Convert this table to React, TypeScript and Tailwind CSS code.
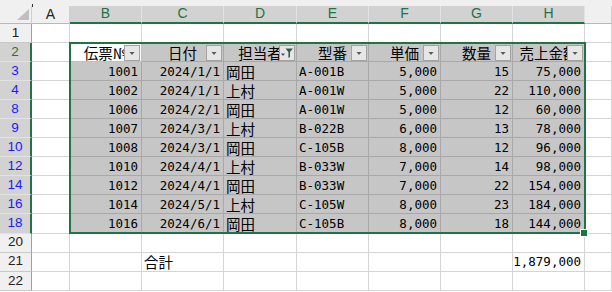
import React from 'react';

// sheet fonts
const mono = "font-['DejaVu_Sans_Mono',monospace] text-[12.5px] leading-[17px]";
const jp = "font-['Noto_Sans_CJK_JP',sans-serif] text-[14.5px] leading-[17px]";

const letters = ['B', 'C', 'D', 'E', 'F', 'G', 'H'];
const heads = ['伝票№', '日付', '担当者', '型番', '単価', '数量', '売上金額'];

// visible rows after the 担当者 filter
const rows = [
  { n: 3, v: ['1001', '2024/1/1', '岡田', 'A-001B', '5,000', '15', '75,000'] },
  { n: 4, v: ['1002', '2024/1/1', '上村', 'A-001W', '5,000', '22', '110,000'] },
  { n: 8, v: ['1006', '2024/2/1', '岡田', 'A-001W', '5,000', '12', '60,000'] },
  { n: 9, v: ['1007', '2024/3/1', '上村', 'B-022B', '6,000', '13', '78,000'] },
  { n: 10, v: ['1008', '2024/3/1', '岡田', 'C-105B', '8,000', '12', '96,000'] },
  { n: 12, v: ['1010', '2024/4/1', '上村', 'B-033W', '7,000', '14', '98,000'] },
  { n: 14, v: ['1012', '2024/4/1', '岡田', 'B-033W', '7,000', '22', '154,000'] },
  { n: 16, v: ['1014', '2024/5/1', '上村', 'C-105W', '8,000', '23', '184,000'] },
  { n: 18, v: ['1016', '2024/6/1', '岡田', 'C-105B', '8,000', '18', '144,000'] },
];

function FilterButton({ active }: { active?: boolean }) {
  return (
    <span className="absolute right-[1px] bottom-0 flex h-4 w-4 items-center justify-center border border-[#a3a3a3] bg-[#e6e6e6]">
      {active ? (
        <svg width="14" height="14" viewBox="0 0 14 14">
          <path d="M1 7.5h4l-2 2.5z" fill="#505050" />
          <path d="M5.5 2.5h7.5l-3 3.5v5l-1.6 1v-6z" fill="#2f5e4e" />
        </svg>
      ) : (
        <svg width="14" height="14" viewBox="0 0 14 14">
          <path d="M4.5 6h5l-2.5 3z" fill="#595959" />
        </svg>
      )}
    </span>
  );
}

function ColHead({ label, sel }: { label?: string; sel?: boolean }) {
  return (
    <div
      className={
        sel
          ? "flex items-center justify-center border-r border-b-2 border-r-[#e2e2e2] border-b-[#217346] bg-[#d2d2d2] font-['Liberation_Sans',sans-serif] text-[14px] text-[#217346]"
          : "flex items-center justify-center border-r border-b border-r-[#d0d0d0] border-b-[#b8b8b8] bg-[#f0f0f0] font-['Liberation_Sans',sans-serif] text-[14px] text-[#222]"
      }
    >
      {label}
    </div>
  );
}

function RowHead({ label, tone }: { label: string; tone: 'plain' | 'top' | 'filt' }) {
  const cls =
    tone === 'plain'
      ? 'bg-[#f0f0f0] text-[#222] border-r border-b border-r-[#a0a0a0] border-b-[#c8c8c8]'
      : tone === 'top'
        ? 'bg-[#d2d2d2] text-[#217346] border-r-2 border-b border-r-[#217346] border-b-[#e2e2e2]'
        : 'bg-[#d2d2d2] text-[#1a1aff] border-r-2 border-b border-r-[#217346] border-b-[#e2e2e2]';
  return (
    <div className={`flex items-center justify-center font-['Liberation_Sans',sans-serif] text-[13.5px] ${cls}`}>
      {label}
    </div>
  );
}

function Blank() {
  return <div className="border-r border-b border-[#d4d4d4] bg-white" />;
}

function HeadCell({ text, active, filtered }: { text: string; active?: boolean; filtered?: boolean }) {
  return (
    <div
      className={`relative flex items-center justify-center whitespace-nowrap border-r border-b text-black ${jp} ${
        active ? 'border-[#c0c0c0] bg-white' : 'border-[#a8a8a8] bg-[#c6c6c6]'
      }`}
    >
      <span>{text}</span>
      <FilterButton active={filtered} />
    </div>
  );
}

function DataCell({ text, col }: { text: string; col: number }) {
  const left = col === 2 || col === 3;
  const font = col === 2 ? jp : mono;
  return (
    <div
      className={`flex items-center whitespace-nowrap border-r border-b border-[#a8a8a8] bg-[#c6c6c6] text-black ${font} ${
        left ? 'justify-start pl-[2px]' : 'justify-end pr-[3px]'
      }`}
    >
      <span>{text}</span>
    </div>
  );
}

export default function App() {
  return (
    <div className="relative h-[292px] w-[612px] overflow-hidden bg-white">
      {/* strip above the column headers */}
      <div className="relative h-[5.5px] bg-[#f0f0f0]">
        <span className="absolute left-[32px] top-[4px] h-[3px] w-px bg-[#333]" />
      </div>

      <div className="grid grid-cols-[32px_38px_72px_82px_73px_72px_72px_72px_72px_27px] grid-rows-[18.5px_repeat(14,19.05px)]">
        {/* column headers */}
        <div className="relative border-r border-b border-r-[#d0d0d0] border-b-[#b8b8b8] bg-[#f0f0f0]">
          <svg className="absolute right-[2px] bottom-[3px]" width="12" height="11" viewBox="0 0 12 11">
            <path d="M12 0v11H0z" fill="#bfbfbf" />
          </svg>
        </div>
        <ColHead label="A" />
        {letters.map((l) => (
          <ColHead key={l} label={l} sel />
        ))}
        <ColHead />

        {/* row 1 */}
        <RowHead label="1" tone="plain" />
        {Array.from({ length: 9 }).map((_, i) => (
          <Blank key={`r1-${i}`} />
        ))}

        {/* row 2: table header with filter buttons */}
        <RowHead label="2" tone="top" />
        <Blank />
        {heads.map((h, i) => (
          <HeadCell key={h} text={h} active={i === 0} filtered={i === 2} />
        ))}
        <Blank />

        {/* filtered data rows */}
        {rows.map((r) => (
          <React.Fragment key={r.n}>
            <RowHead label={String(r.n)} tone="filt" />
            <Blank />
            {r.v.map((v, i) => (
              <DataCell key={i} text={v} col={i} />
            ))}
            <Blank />
          </React.Fragment>
        ))}

        {/* row 20 */}
        <RowHead label="20" tone="plain" />
        {Array.from({ length: 9 }).map((_, i) => (
          <Blank key={`r20-${i}`} />
        ))}

        {/* row 21: total */}
        <RowHead label="21" tone="plain" />
        <Blank />
        <Blank />
        <div className={`flex items-center border-r border-b border-[#d4d4d4] bg-white pl-[2px] text-black ${jp}`}>
          <span>合計</span>
        </div>
        <Blank />
        <Blank />
        <Blank />
        <Blank />
        <div className={`flex items-center justify-end border-r border-b border-[#d4d4d4] bg-white pr-[3px] text-black ${mono}`}>
          <span>1,879,000</span>
        </div>
        <Blank />

        {/* row 22 */}
        <RowHead label="22" tone="plain" />
        {Array.from({ length: 9 }).map((_, i) => (
          <Blank key={`r22-${i}`} />
        ))}
      </div>

      {/* selection border B2:H18 with fill handle */}
      <div className="pointer-events-none absolute left-[69px] top-[42px] h-[192px] w-[517px] border-2 border-[#217346]" />
      <div className="pointer-events-none absolute left-[581px] top-[230px] h-[6px] w-[6px] bg-[#217346] outline outline-1 outline-white" />
    </div>
  );
}
